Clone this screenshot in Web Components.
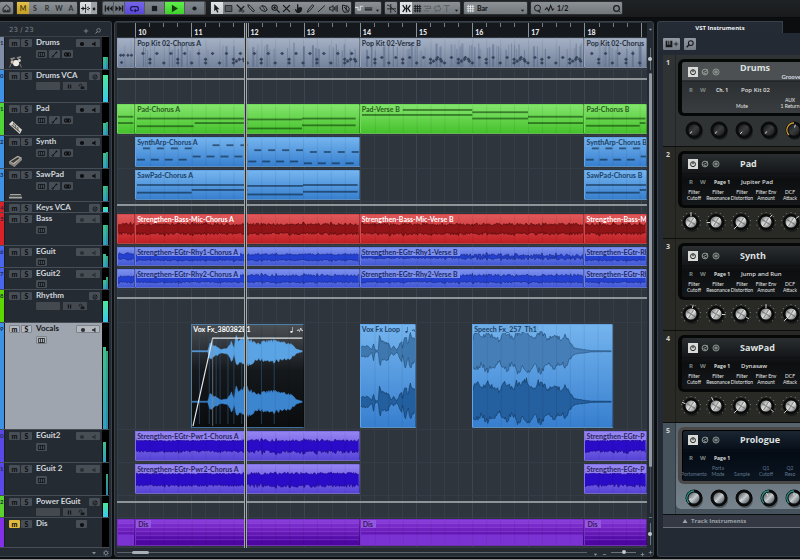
<!DOCTYPE html>
<html lang="en">
<head>
<meta charset="utf-8">
<title>Arrangement</title>
<style>
html,body{margin:0;height:100%;background:#0b0d0f;overflow:hidden}
body{font-family:Lato,"Open Sans",sans-serif;font-size:7px;font-weight:700;line-height:8px;color:#d5dae0}
</style>
</head>
<body>
<daw-app></daw-app>
<script>
const BASE = `:host,*{box-sizing:border-box}
button,select,input{font:inherit;color:inherit;margin:0;padding:0;border:0;background:none;border-radius:0;appearance:none;outline:0}
button{display:flex;align-items:center;justify-content:center}svg{display:block}`;

function define(name, render) {
  customElements.define(name, class extends HTMLElement {
    connectedCallback() {
      if (this.shadowRoot) return;
      const t = document.createElement('template');
      t.innerHTML = render(this);
      this.attachShadow({mode: 'open'}).append(t.content.cloneNode(true));
    }
  });
}

/* ---------- icons ---------- */
const S = 'fill="none" stroke="currentColor"';
const ICONS = {
  home: `<path ${S} stroke-width="1.3" d="M1.5 5.5 6 1.5l4.5 4v5h-9z"/><path d="M3 10V7.500h2V9h2V7.500h2V10z" fill="currentColor"/>`,
  auto: `<path fill="currentColor" d="M5.500 0h1v12h-1zM0 5.300h12v1.400H0zM2 3 5 6 2 9zM10 3 7 6l3 3z"/>`,
  dot: `<circle cx="6" cy="6" r="2.800" fill="currentColor"/>`,
  rec: `<circle cx="6" cy="6" r="4.200" fill="currentColor"/>`,
  prev: `<path fill="currentColor" d="M1 2h1.800v8H1zM7 2v8L3 6zM11.500 2v8l-4-4z"/>`,
  next: `<path fill="currentColor" d="M9.200 2H11v8H9.200zM5 2v8l4-4zM.5 2v8l4-4z"/>`,
  cycle: `<path ${S} stroke-width="1.500" d="M4 9H3.200C0 9 0 3.500 3.200 3.500h5.600C12 3.500 12 9 8.800 9H7.500"/><path fill="currentColor" d="M8 6.300v5L4.600 9z"/>`,
  stop: `<path fill="currentColor" d="M2.500 2.500h7v7h-7z"/>`,
  play: `<path fill="currentColor" d="M2.500 1 10.500 6l-8 5z"/>`,
  arrow: `<path fill="currentColor" d="M3 0v9.500l2.200-2L7 11.500l1.600-.8L6.900 7H10z"/>`,
  rect: `<path fill="#555b5f" stroke="currentColor" d="M1.500 2h9v8h-9z"/>`,
  scissors: `<path ${S} stroke-width="1.500" d="M1 1 8 8M5.500 8 11 3"/><circle ${S} cx="9" cy="9.500" r="1.500"/><circle ${S} cx="5" cy="9" r="1.300"/>`,
  glue: `<path ${S} stroke-width="1.200" d="m1 1 3 1 6 7-2 1.500-6-6.500z"/>`,
  eraser: `<path ${S} stroke-width="1.300" d="m1 5 3-3 4.500 1.500L11 8 8 10 3.500 8.500z"/><path ${S} d="M4 2 8 8.500"/>`,
  zoom: `<circle ${S} stroke-width="1.400" cx="4.800" cy="4.800" r="3.600"/><path ${S} stroke-width="1.800" d="m7.500 7.500 4 4M3 4.800h3.600M4.800 3v3.600"/>`,
  mute: `<path ${S} stroke-width="1.800" d="m1.500 1.500 9 9M10.500 1.500l-9 9"/>`,
  hand: `<path fill="currentColor" d="M4 0 6 1l-.5 3.500L9.500 4l1.500 2-1 4-3 2H4L1 8l.5-1.500L4 8z"/>`,
  pencil: `<path ${S} stroke-width="1.200" d="m2 11 .7-3L8.500 1l2 1.500-6 7z"/>`,
  line: `<path ${S} stroke-width="1.300" d="M1.500 10.500 10.500 2"/>`,
  speaker: `<path ${S} stroke-width="1.200" d="M.8 4.300h2L5.500 2v8L2.800 7.700h-2zM7.500 4v4M9.300 2.500v7M11 1.500v9"/>`,
  paint: `<path ${S} stroke-width="1.300" d="M2 1.500 9 3l2 3-1 4.500-6 .5-2-4zM4 4l5 5M7 3v6"/>`,
  link: `<path ${S} stroke-width="1.500" d="M0 4.500h4V8h3V3h4"/>`,
  eq: `<path fill="currentColor" d="M1 4.500h10V6H1zM1 7h10v1.500H1z"/>`,
  down: `<path fill="currentColor" d="M2 4h8L6 9z"/>`,
  cross: `<path ${S} stroke-width="1.200" d="M5 0v12M0 6.500h12M0 1.500c5 0 7 6 12 9"/>`,
  snap: `<path ${S} stroke-width="1.800" d="M1 1.500 4 6l-3 4.500M11 1.500 8 6l3 4.500M6 1v10M4 6h4"/>`,
  grid: `<path ${S} stroke-width="1.200" d="M3 1v10M6 1v10M9 1v10M1 3.200h10M1 6.200h10M1 9.200h10"/>`,
  list: `<path ${S} stroke-width="1.300" d="M1 3h9M3 6h8M1 9h7M10 3v3"/>`,
  loop: `<path ${S} stroke-width="1.400" d="M2 7V5l2-2h5M10 5v2L8 9H3M7.500 1.500 9 3 7.500 4.500M4.500 7.500 3 9l1.500 1.500"/>`,
  tee: `<path ${S} stroke-width="1.300" d="M1 2h8M5 2v9"/>`,
  q: `<circle ${S} stroke-width="1.300" cx="6" cy="5.500" r="4"/><path ${S} stroke-width="1.500" d="m6.500 8 3 3.500"/>`,
  ring: `<circle ${S} stroke-width="1.600" cx="6" cy="6" r="3.800"/><path ${S} d="m8 8 3 3"/>`,
  wave: `<path ${S} stroke-width="1.400" d="M0 8 2.500 5 5 9l2.500-7L10 8l2-2"/>`,
  lanes: `<path ${S} stroke-width="1.300" d="M.7 2.500h10.600v7H.7zM4.200 2.500v7M7.800 2.500v7"/>`,
  pen: `<path ${S} stroke-width="1.600" d="m3 9.500 6-7"/><circle cx="9.300" cy="2.500" r="1.500" fill="currentColor"/><circle cx="3" cy="9.500" r="1.500" ${S}/>`,
  stereo: `<path fill="currentColor" fill-rule="evenodd" d="M3.800 2a4 4 0 1 0 0 8 4 4 0 0 0 2.200-.8A4 4 0 0 0 8.200 10a4 4 0 1 0 0-8A4 4 0 0 0 6 2.800 4 4 0 0 0 3.800 2zM4 4v4a2 2 0 1 1 0-4zM8.500 4v4a2 2 0 0 0 0-4z"/>`,
  spk: `<path fill="currentColor" d="M2 4.500h2.500L9 1v10L4.500 7.500H2z"/>`,
  edit: `<circle ${S} stroke-width="1.400" cx="6" cy="6" r="4.300"/><path ${S} stroke-width="1.200" d="M4 6.500 8.500 4.500M4 6.500C4 9 8 8.500 8 8M10 2 8 4"/>`,
  pause: `<path fill="currentColor" d="M3 2.500h2.300v7H3zM6.700 2.500H9v7H6.700z"/>`,
  lock: `<path fill="currentColor" d="M4.500 6H11v4.500H4.500z"/><path ${S} stroke-width="1.300" d="M6.500 6V3.500C6.500 1.500 2 1.500 2 3.500V6"/>`,
  plus: `<path ${S} stroke-width="1.600" d="M6 1.500v9M1.500 6h9"/>`,
  minus: `<path ${S} stroke-width="1.600" d="M2 6h8"/>`,
  find: `<circle ${S} stroke-width="1.600" cx="7.200" cy="4.600" r="3.600"/><path ${S} stroke-width="2" d="M4.600 7.200 1 11"/>`,
  gear: `<circle ${S} stroke-width="1.500" cx="6" cy="6" r="3.300"/><path ${S} stroke-width="1.400" stroke-dasharray="1.900 1.900" d="M6 .8A5.200 5.200 0 1 1 5.990.8"/>`,
  keys: `<path fill="currentColor" d="M1 1h2.500v6H5V1h1.500v6H8V1h3v10H1z"/>`,
  power: `<circle ${S} stroke-width="1.400" cx="6" cy="6.300" r="3.700"/><path ${S} stroke-width="1.600" d="M6 3.500v3"/>`,
  flower: `<circle ${S} stroke-width="1.200" cx="6" cy="6" r="4.600"/><path ${S} stroke-width="1.100" d="M6 2v8M2.500 4l7 4M9.500 4l-7 4"/>`,
  note: `<path fill="currentColor" d="M7.500 0v9c0 3-5 3.500-5 1s3-2 4-1.500V0z"/>`,
  tri: `<path fill="currentColor" d="M6 2 11 10H1z"/>`,
  drumkit: `<path fill="#8b8a88" d="M1 3l4-1 1 1-4 2zM7 2l4-1v1.500L8 4z"/><circle cx="6.500" cy="7.500" r="2.800" fill="#efece6"/><circle cx="3" cy="6.500" r="1.600" fill="#c9b8a2"/><circle cx="9.500" cy="5" r="1.400" fill="#d9d5cf"/><path stroke="#aaa" stroke-width=".6" d="M2 8 .5 11.500M10 8l1.500 3.500"/>`,
  keytar: `<path fill="#dddad2" d="M0 3 3 0l9 8-2 4z"/><path stroke="#55534f" stroke-width="1" d="M2.500 3.500 10 10M4 1.800 5 4M6 3.500 6.500 6M8 5.500 8.500 8"/>`,
  synth: `<path fill="#b7b3ab" d="M0 7 8 1.500l4 2L4.500 10z"/><path fill="#3b3a38" d="M1.500 7 8 3l2 .8L4 8.200z"/><path fill="#8e8a84" d="M0 7l4.500 3L12 3.500v2L5 12 0 9z"/>`,
  flat: `<path fill="#a7a7a2" d="M1 6.500h10v1.200H1zM0 9h12v1.500H0z"/><path fill="#55575a" d="M0 7.700h12V9H0z"/>`
};
define('daw-icon', el => `<style>:host{display:block;flex:none;width:var(--s,8px);height:var(--s,8px)}svg{width:100%;height:100%;overflow:visible}</style>
<svg viewBox="0 0 12 12" aria-hidden="true">${ICONS[el.getAttribute('name')]}</svg>`);
const ic = n => `<daw-icon name="${n}"></daw-icon>`;

/* ---------- toolbar ---------- */
define('tool-group', () => `<style>${BASE}
:host{display:flex;align-items:stretch;height:12px;flex:none;background:linear-gradient(#8d9296,#70767a);color:#191b1d;border-radius:1px;box-shadow:0 0 0 1px #2c3032}
::slotted(*){flex:1}</style><slot></slot>`);

define('daw-toolbar', () => {
  const tools = 'arrow rect scissors glue eraser zoom mute hand pencil line speaker paint'.split(' ');
  return `<style>${BASE}
:host{display:flex;flex:none;height:18px;padding:2px 0 3px;gap:4px;background:linear-gradient(#202325,#181a1c);align-items:flex-start;border-bottom:1px solid #0a0b0c}
daw-icon{--s:9px}
.home{width:13px}.mode{width:60px}.mode button{color:#2b2f32}.mode .on{background:linear-gradient(#e6c14a,#c49c24);color:#4a3c10}
.auto{width:17px;margin-right:2px;margin-left:-1px;background:linear-gradient(#dfe2e4,#bfc3c6)}.auto button+button{flex:0 0 6px;background:#9ea3a7}.auto button+button daw-icon{--s:6px}
.trans{width:102px;margin-right:2px;box-shadow:0 0 0 1px #4a4e51;background:linear-gradient(#7f858d,#6c727a)}
.trans button{border-right:1px solid #55595f}.trans button:nth-child(-n+2){flex:0 0 11px}
.cyc{background:linear-gradient(#7566ea,#5a48d8);color:#1b1750}.go{background:linear-gradient(#5ff04c,#3fd02c);color:#123f0c}
.tools{width:140px}.tools button:first-child{background:linear-gradient(#e4e6e8,#c4c8ca)}
.lk{width:26px}.lk button:first-child{color:#d5d9db}.cr{width:12px;margin-right:-1px}.sn{width:60px}.sn button:first-child{background:#dfe2e4;flex:0 0 12px}.sn .dim{color:#5d6367}.sn button:last-child,.lk button:last-child{flex:0 0 8px}
.sn button:last-child daw-icon,.lk button:last-child daw-icon{--s:5px}
.bar{width:63px;align-items:center}.bar select,.qz select{font-size:7px;color:#111}
.bar label,.qz label{display:flex;align-items:center;gap:2px;flex:1;padding:0 2px}.bar select{flex:1}.bar daw-icon:first-child{color:#dfe3e5}
.bar daw-icon:last-child{--s:5px}
.qz{width:91px;align-items:center}.qz button{flex:0 0 12px}.qz select{width:20px}
</style>
<tool-group class="home"><button aria-label="Home">${ic('home')}</button></tool-group>
<tool-group class="mode">${[...'MSRWA'].map((c, i) => `<button class="${i ? '' : 'on'}">${c}</button>`).join('')}</tool-group>
<tool-group class="auto"><button aria-label="Auto scroll">${ic('auto')}</button><button aria-label="Options">${ic('dot')}</button></tool-group>
<tool-group class="trans"><button aria-label="Previous">${ic('prev')}</button><button aria-label="Next">${ic('next')}</button><button class="cyc" aria-label="Cycle">${ic('cycle')}</button><button aria-label="Stop">${ic('stop')}</button><button class="go" aria-label="Play">${ic('play')}</button><button aria-label="Record">${ic('dot')}</button></tool-group>
<tool-group class="tools">${tools.map(t => `<button aria-label="${t}">${ic(t)}</button>`).join('')}</tool-group>
<tool-group class="lk"><button aria-label="Link">${ic('link')}</button><button aria-label="Curve">${ic('eq')}</button><button aria-label="More">${ic('down')}</button></tool-group>
<tool-group class="cr"><button aria-label="Crossing">${ic('cross')}</button></tool-group>
<tool-group class="sn"><button aria-label="Snap">${ic('snap')}</button><button aria-label="Grid">${ic('grid')}</button><button class="dim" aria-label="Events">${ic('list')}</button><button class="dim" aria-label="Shuffle">${ic('loop')}</button><button class="dim" aria-label="Type">${ic('tee')}</button><button aria-label="More">${ic('down')}</button></tool-group>
<tool-group class="bar"><label>${ic('grid')}<select aria-label="Grid type"><option>Bar</option></select>${ic('down')}</label></tool-group>
<tool-group class="qz"><button aria-label="Quantize">${ic('q')}</button><button aria-label="Iterative">${ic('wave')}</button><label><select aria-label="Quantize preset"><option>1/2</option></select></label><button aria-label="Quantize panel">${ic('ring')}</button></tool-group>`;
});

/* ---------- track list ---------- */
const TRACKS = [
  {n: 'Drums', c: '#7f8ea6', no: 1, k: 'inst', pic: 'drumkit', m: [12, 12]},
  {n: 'Drums VCA', c: '#3e92e6', no: 0, k: 'vca', m: [27]},
  {n: 'Pad', c: '#4fd535', no: 1, k: 'inst', pic: 'keytar', m: [12, 13]},
  {n: 'Synth', c: '#3e92e6', no: 2, k: 'inst', pic: 'synth', m: [15, 16]},
  {n: 'SawPad', c: '#3e92e6', no: 3, k: 'inst', pic: 'flat', m: [15, 15]},
  {n: 'Keys VCA', c: '#d82228', no: 4, k: 'vca', h: 11, m: [5]},
  {n: 'Bass', c: '#d82228', no: 5, k: 'audio', m: [20, 20]},
  {n: 'EGuit', c: '#4a66ee', no: 6, k: 'audio', h: 22, m: [13, 11]},
  {n: 'EGuit2', c: '#4a66ee', no: 7, k: 'audio', h: 22, m: [9, 12]},
  {n: 'Rhythm', c: '#5cd800', no: 8, k: 'vca', m: [21]},
  {n: 'Vocals', c: '#3e92e6', no: 9, k: 'audio', h: 107, sel: 1, m: [82, 78]},
  {n: 'EGuit2', c: '#5b48e8', no: 0, k: 'audio', m: [20, 0]},
  {n: 'EGuit 2', c: '#5b48e8', no: 1, k: 'audio', m: [0, 21]},
  {n: 'Power EGuit', c: '#5cd22e', no: 2, k: 'vca', h: 22, m: [14]},
  {n: 'Dis', c: '#8430e8', no: '', k: 'midi', h: 30, m: []}
];
define('track-row', el => {
  const t = TRACKS[el.getAttribute('index')], vca = t.k == 'vca';
  const box = (n, l) => `<button class="b" aria-label="${l}">${ic(n)}</button>`;
  return `<style>${BASE}
:host{display:flex;flex:none;height:${t.h || 33}px;overflow:hidden;border-bottom:1px solid #474d54;background:#252b32;color:#cfd5dc}
.no{width:5px;flex:none;background:${t.c};color:#1d2b44;font-size:6px;overflow:hidden;padding-top:2px;border-right:1px solid #1a1d21}
.body{flex:1;min-width:0;display:grid;grid-template-columns:23px minmax(0,1fr) auto;gap:2px 4px;padding:1px 2px 0 4px;align-content:start;align-items:center;${t.sel ? 'background:#9fa5ae;color:#15181b' : ''}}
.ms{display:flex;gap:1px}.ms button,.b,.rm{height:8px;background:#484e55;color:#0c0e11;border-radius:1px}
.ms button{flex:1;font-size:7px;font-weight:900}.ms .on{background:#e0b93c}
.name{font-size:8px;line-height:9px;white-space:nowrap;margin:0;font-weight:700}
.rm{display:flex;width:${t.k == 'midi' ? 11 : 24}px;--s:6px}.rm button{flex:1}.right{display:flex;min-width:${vca ? 11 : 24}px;justify-content:${vca ? 'flex-end' : 'flex-start'}}
.row2{grid-column:2/4;display:flex;gap:2px;padding-top:${vca || t.h == 22 ? 0 : 1}px}.b{width:11px;--s:6px}
.row2 .b{--s:7px}.dim{color:#2c3136}.val{width:24px;height:8px;background:#43494f;border-radius:1px}.pl{display:flex;width:24px;height:8px;background:#43494f;color:#15181c;margin-left:1px;--s:7px}.pl button{flex:1}
.pic{--s:13px;align-self:start;padding-top:6px}
.meter{width:7px;flex:none;background:#000;display:flex;align-items:flex-end;padding:0 1px}
.meter i{flex:1;background:linear-gradient(#4be89a,#38c8f0)}.meter.two i{background:linear-gradient(#3fc08c,#2f9fc4)}.meter.two i+i{background:linear-gradient(#37a87c,#2b8bb0)}
${t.sel ? '.ms button,.b,.rm{background:#b4b9bf;border:1px solid #7d838a}' : ''}
</style>
<span class="no">${t.no}</span>
<div class="body"><div class="ms"><button class="${t.k == 'midi' ? 'on' : ''}" aria-label="Mute">m</button><button aria-label="Solo">S</button></div>
<h3 class="name">${t.n}</h3>
<div class="right">${vca ? box('edit', 'Edit') : `<div class="rm ${t.k == 'audio' ? 'dim' : ''}"><button aria-label="Record">${ic('rec')}</button>${t.k == 'midi' ? '' : `<button aria-label="Monitor">${ic('spk')}</button>`}</div>`}</div>
${t.h == 11 || t.k == 'midi' ? '' : `${t.pic ? `<div class="pic" style="grid-row:2/4">${ic(t.pic)}</div>` : ''}
<div class="row2">${vca ? `<span class="val"></span><span class="pl"><button aria-label="Pause">${ic('pause')}</button><button aria-label="Unlock">${ic('lock')}</button></span>` : t.k == 'inst' ? box('lanes', 'Lanes') + box('pen', 'Edit') + box('stereo', 'Stereo') : box('lanes', 'Lanes')}</div>`}</div>
<div class="meter ${t.m.length > 1 ? 'two' : ''}">${t.m.map(v => `<i style="height:${v}px"></i>`).join('')}</div>`;
});
define('track-list', () => `<style>${BASE}
:host{display:flex;flex-direction:column;flex:0 0 112px;min-width:0;min-height:0;background:#252b33;border:solid #39414c;border-width:1px 1px 1px 0;border-radius:0 3px 3px 0;padding:0 2px 0 0}
header{display:flex;align-items:center;height:15px;flex:none;padding:2px 8px 0 9px;gap:6px;color:#858d96;border-bottom:1px solid #3a4149;--s:6px}
header span{flex:1;font:7px/8px "DejaVu Sans",sans-serif;color:#79818a}
.rows{flex:1;min-height:0;overflow:hidden;display:flex;flex-direction:column}
footer{height:8px;flex:none;display:flex;justify-content:flex-end;align-items:center;gap:6px;--s:6px;color:#868e97}
</style><header><span>23 / 23</span><button aria-label="Add track">${ic('plus')}</button><button aria-label="Find track">${ic('find')}</button></header>
<div class="rows">${TRACKS.map((t, i) => `<track-row index="${i}"></track-row>`).join('')}</div>
<footer><button aria-label="Divide">${ic('down')}</button><button aria-label="Settings">${ic('gear')}</button></footer>`);

/* ---------- event drawings ---------- */
function rng(seed) { return () => (seed = (seed * 16807) % 2147483647) / 2147483647; }
function band(w, top, bot, seed, jt, jb, mod) {
  const r = rng(seed), a = [], b = [];
  for (let x = 0; x <= w; x += 1) {
    const k = mod ? mod(x / w) : 1, spike = x % 14 < 2 ? 1.6 : 1;
    a.push([x, (top - (r() - .3) * jt * spike * k).toFixed(1)]);
    b.push([x, (bot + (r() - .3) * jb * spike * k).toFixed(1)]);
  }
  return {a, b};
}
function area(o, fill, stroke) {
  return `<path d="M${o.a.join('L')}L${o.b.slice().reverse().join('L')}Z" fill="${fill}"/><path d="M${o.a.join('L')}M${o.b.join('L')}" fill="none" stroke="${stroke}" stroke-width="1" opacity=".6"/>`;
}
function env(w, cy, amp, pts, seed, f, st) {
  const r = rng(seed), a = [], b = [];
  for (let x = 0; x <= w; x++) {
    const p = x / w; let i = 0; while (i < pts.length - 2 && pts[i + 1][0] < p) i++;
    const [x0, y0] = pts[i], [x1, y1] = pts[i + 1], v = y0 + (y1 - y0) * Math.min(1, (p - x0) / (x1 - x0));
    a.push([x, (cy - Math.max(.4, v * amp * (.7 + .35 * r()))).toFixed(1)]);
    b.push([x, (cy + Math.max(.4, v * amp * (.7 + .35 * r()))).toFixed(1)]);
  }
  return area({a, b}, f, st);
}
const bar = (x, y, w, c = '#0b2238', h = 2) => `<rect x="${x}" y="${y}" width="${w}" height="${h}" fill="${c}" opacity=".6"/>`;
const DRAW = {
  drums(w, s) {
    const r = rng(s * 77 + 5), hi = s == 2 ? 20.5 : 16; let o = '';
    for (let x = 2; x < w; x += 3) if (r() > .45) o += `<rect x="${(x + r() * 2).toFixed(0)}" y="${(4 + r() * 9).toFixed(0)}" width="${r() > .7 ? 2 : 1}" height="27" fill="#48597a" opacity="${(.15 + r() * .35).toFixed(2)}"/>`;
    const d = (x, y) => { if (x < w - 1) o += `<path d="M${x} ${y - 2}l2 2-2 2-2-2z" fill="#39455c"/>`; };
    if (s == 0) { [[3, 18], [6, 18], [11, 18], [15, 18], [4, 26]].forEach(p => d(...p)); return o; }
    for (let x = 0; x < w; x += 28) {
      d(x + 7, hi); d(x + 14, 22.5); d(x + 14, 26.5); d(x + 21, hi); d(x + 28, 26.5);
      if (x % 112 == 84 || (s == 2 && x % 84 == 56)) { d(x + 17, 24.5); d(x + 20, 22.5); d(x + 24, 22.500); d(x + 25, 24.5); }
    }
    return o;
  },
  pad(w, s) {
    const g = '#12400c';
    if (s == 0) return bar(0, 12, 17, g) + bar(0, 19, 17, g);
    if (s == 1) return bar(1, 14, 108, g) + bar(1, 22.5, 57, g) + bar(59, 19, 53, g) + bar(112, 15, 55, g) + bar(112, 25, 55, g, 2) + bar(167, 14, 54, g) + bar(167, 21.5, 54, g);
    if (s == 2) return bar(1, 10, 111, g) + bar(42, 4.5, 70, g) + bar(112, 7, 56, g) + bar(112, 14, 56, g) + bar(168, 12, 56, g) + bar(168, 19, 56, g);
    return bar(1, 14, 61, g) + bar(1, 22, 55, g) + bar(56, 19, 6, g);
  },
  synth(w) {
    let o = ''; const up = [10.500, 7, 12.5, 14.500], lo = [23, 19.5, 25, 27];
    for (let q = 0; q < 4; q++) for (let i = 0; i < 4; i++) {
      if (!(q == 1 && i == 0)) o += bar(q * 56 + 7 + i * 14, up[q], 7);
      o += bar(q * 56 + 1 + i * 14, lo[q], 8);
    }
    return o;
  },
  saw: () => bar(1, 14.5, 108) + bar(1, 23, 55) + bar(56, 20, 56) + bar(112, 15.5, 56) + bar(112, 25, 56) + bar(168, 14.5, 55) + bar(168, 22, 55),
  bass: (w, s) => area(band(w, 11, 20, 31 + s, 3, 3), '#8e1417', '#3d0607'),
  rhy: (w, s) => {
    if (s == 10) return env(w, 10, 5, [[0, .4], [.1, 1], [.3, .5], [.6, 1], [1, .6]], 5, '#2340d0', '#14237a');
    if (s == 12) return area(band(w, 9.5, 11.5, 9, 2, 2, p => p > .45 ? 1.9 : 1), '#2340d0', '#14237a');
    return area(band(w, s > 20 ? 7 : 8, 14, 41 + s, s > 20 ? 3 : 2, 2), '#2340d0', '#14237a');
  },
  pwr: (w, s) => area(band(w, 10, s > 4 ? 22 : 21, 61 + s, 2, 3, p => p > .48 ? 1.4 : .8), '#2a0bc8', '#1a0880'),
  dis(w, s) {
    let o = ''; const c = ['#7a2bcc', '#7022c0', '#6418b4', '#580eaa', '#4e06a2'];
    for (let i = 0; i < 5; i++) o += `<rect y="${5 * i + 4}" width="${w}" height="6" fill="${c[i]}"/><rect y="${5 * i + 4}" width="${w}" height="1" fill="#a46ae6" opacity=".45"/>`;
    if (s % 2 == 0) o += `<rect y="18" width="${w}" height="14" fill="#7a33d2"/>`;
    return o;
  },
  vox(w) {
    const p = [[0, .03], [.18, .03], [.2, .45], [.26, .3], [.33, .1], [.4, .15], [.45, .55], [.48, .2], [.5, .9], [.54, .5], [.58, .9], [.62, .8], [.75, .45], [.9, .6], [1.1, .45], [1.2, .1], [1.25, .03]].map(([a, b]) => [a * .8, b]);
    p[p.length - 1][0] = 1; let l = '';
    for (let x of [7, 17, 24, 28, 36, 42, 50, 53, 70, 83]) l += `<rect x="${x}" y="12" width="1" height="90" fill="#2b4c6e" opacity=".8"/>`;
    return l + env(w, 27, 20, p, 7, '#5aa4e6', '#5aa4e6') + env(w, 79, 20, p, 7, '#3c86d0', '#3c86d0') +
      `<path d="M1 104 21 13.500H${w}" fill="none" stroke="#e3e6e8" stroke-width="1.200"/><path d="M21 14V104" stroke="#8a8f94" stroke-width=".7"/>`;
  },
  loop(w) {
    const p = [[0, .3], [.14, .35], [.2, .05], [.23, .5], [.26, .05], [.32, .05], [.34, .8], [.4, .5], [.5, .5], [.56, .05], [.6, .3], [.66, .04], [.7, .3], [.74, .7], [.77, .2], [.82, 1], [.87, .3], [.9, 1], [1, .6]];
    return env(w, 27, 20, p, 3, '#3f78ae', '#1e466e') + env(w, 79, 20, p, 3, '#235e9e', '#103458');
  },
  speech(w) {
    const p = [], v = [.7, .85, .6, 1, .75, .7, .5, .9, .8, .6, .95, .8, 1, .85, .7, 1, .8, .6, .85, .7, .55, .8];
    v.forEach((y, i) => p.push([i * .032, y]));
    p.push([.69, .5], [.73, .15], [.8, .08], [.85, .03], [1, .02]);
    return env(w, 27, 24, p, 13, '#467fb8', '#1e466e') + env(w, 79, 24, p, 13, '#245f9f', '#103458');
  }
};
const THEME = {
  drums: ['#a4b0c4', '#74839c', '#25303f'], pad: ['#83e56c', '#45c22c', '#2a5a1c'], synth: ['#74b4ee', '#377fcf', '#1d3f66'], saw: ['#74b4ee', '#377fcf', '#1d3f66'],
  bass: ['#e0585a', '#c02024', '#fff'], rhy: ['#7c90ee', '#4258d8', '#1d2a66'], pwr: ['#9484f2', '#5643d8', '#2a2560'],
  dis: ['#8a3fdc', '#4e06a2', '#35185e'], vox: ['#4a4f54', '#0a0c0e', '#fff'], loop: ['#74b4ee', '#377fcf', '#1d3f66'], speech: ['#74b4ee', '#377fcf', '#1d3f66']
};
define('daw-clip', el => {
  const k = el.getAttribute('kind'), s = +el.getAttribute('seed') || 0, w = +el.getAttribute('units'), h = +el.getAttribute('tall') || 31, [a, b, c] = THEME[k];
  const icons = k == 'vox' || k == 'loop';
  let beats = ''; for (let x = 14; x < w; x += 14) beats += `<rect x="${x}" width="1" height="${h}" fill="#000" opacity=".07"/>`;
  return `<style>${BASE}
:host{display:block;position:relative;overflow:hidden;min-width:0;margin:1px 0;background:${k == 'vox' ? `linear-gradient(${a},#15181b 45%,${b})` : `linear-gradient(${a},${b})`};border:1px solid ${k == 'vox' ? '#4d7ea8' : `color-mix(in srgb,${a},${b} 30%)`};border-right-color:#0004;border-bottom-color:${k == 'vox' ? '#3d6e98' : '#0003'}}
svg.d{position:absolute;inset:0;width:100%;height:100%}
.t{position:relative;display:flex;color:${c};padding-left:1px;gap:2px;align-items:center}
.t span{flex:none;white-space:nowrap;${k == 'dis' ? 'background:#9557e0;padding:0 3px 0 2px;margin-left:-1px;' : ''}${k == 'rhy' || k == 'pwr' ? `background:${a};padding-right:2px;` : ''}${k == 'speech' ? 'background:#6cabe4;padding-right:2px;' : ''}}
.t i{flex:1}.t daw-icon{--s:6px}
</style><svg class="d" viewBox="0 0 ${w} ${h}" preserveAspectRatio="none" aria-hidden="true">${DRAW[k](w, s)}${beats}</svg>
<div class="t">${el.textContent ? '<span><slot></slot></span>' : ''}${icons ? `<i></i>${ic('note')}${ic('wave')}` : ''}</div>`;
});

/* ---------- arrangement ---------- */
const line = b => 2 + (b - 10) * 4;
const clip = (k, from, to, seed, label = '', tall = 31) => {
  const c0 = from == 9 ? 1 : line(from), c1 = to == 19 ? 39 : line(to);
  const units = from == 9 ? 18 : to == 19 ? 62 : (to - from) * 56;
  return `<daw-clip kind="${k}" seed="${seed}" units="${units}" tall="${tall}" style="grid-column:${c0}/${c1}">${label}</daw-clip>`;
};
const four = (k, s, a, b, c, tall) => clip(k, 9, 10, s, '', tall) + clip(k, 10, 14, s + 1, a, tall) + clip(k, 14, 18, s + 2, b, tall) + clip(k, 18, 19, s + 3, c, tall);
const LANES = [
  four('drums', 0, 'Pop Kit 02-Chorus A', 'Pop Kit 02-Verse B', 'Pop Kit 02-Chorus'), 9,
  four('pad', 0, 'Pad-Chorus A', 'Pad-Verse B', 'Pad-Chorus B'),
  clip('synth', 10, 14, 0, 'SynthArp-Chorus A') + clip('synth', 18, 19, 0, 'SynthArp-Chorus B'),
  clip('saw', 10, 14, 0, 'SawPad-Chorus A') + clip('saw', 18, 19, 0, 'SawPad-Chorus B'), 3,
  four('bass', 0, 'Strengthen-Bass-Mic-Chorus A', 'Strengthen-Bass-Mic-Verse B', 'Strengthen-Bass-M'),
  four('rhy', 10, 'Strengthen-EGtr-Rhy1-Chorus A', 'Strengthen-EGtr-Rhy1-Verse B', 'Strengthen-EGtr-Rh', 20),
  four('rhy', 20, 'Strengthen-EGtr-Rhy2-Chorus A', 'Strengthen-EGtr-Rhy2-Verse B', 'Strengthen-EGtr-Rh', 20), 8,
  clip('vox', 11, 13, 0, 'Vox Fx_380382B1', 105) + clip('loop', 14, 15, 0, 'Vox Fx Loop', 105) + clip('speech', 16, 18.5, 0, 'Speech Fx_257_Th1', 105),
  clip('pwr', 10, 14, 1, 'Strengthen-EGtr-Pwr1-Chorus A') + clip('pwr', 18, 19, 2, 'Strengthen-EGtr-P'),
  clip('pwr', 10, 14, 5, 'Strengthen-EGtr-Pwr2-Chorus A') + clip('pwr', 18, 19, 6, 'Strengthen-EGtr-P'), 6,
  four('dis', 0, 'Dis', 'Dis', 'Dis')
];
define('arrange-view', () => `<style>${BASE}
:host{flex:1;min-width:0;min-height:0;display:grid;grid-template:15px 1fr 8px/1fr 6px;background:#252b33;border:1px solid #39414c;border-radius:3px;padding:0 0 0 2px;position:relative}
.cols{display:grid;grid-template-columns:minmax(0,1820fr) repeat(36,minmax(0,1404fr)) minmax(0,636fr)}
.ruler{grid-area:1/1;background:#15181c;border-top:1px solid #2b323a;overflow:hidden;font-size:7px;font-weight:900;color:#e6e9ec}
.ruler span{border-left:1px solid #8a8f94;padding:5px 0 0 2px;white-space:nowrap}.ruler u{border-left:1px solid #777d83;height:4px}
.lanes{grid-area:2/1;position:relative;overflow:hidden;display:flex;flex-direction:column;background:#2e353d;min-height:0}
.bg{position:absolute;inset:0}.bg i{border-left:1px solid #353d46}.bg i:nth-child(4n+2){border-color:#3b4550}
.lane{position:relative;flex:none;border-bottom:1px solid #353c45}
.lane hr{margin:0;border:0;border-top:2px solid #8f9499;grid-column:1/-1;align-self:start}
.head{position:absolute;z-index:3;top:1px;bottom:8px;left:calc(2px + (100% - 8px) * .239);width:3px;border:solid #a4a7a7;border-width:0 1px;background:#2a2f33}
.v{grid-area:1/2/4/3;display:flex;flex-direction:column;align-items:center;--s:5px;color:#9097a0;padding:3px 0}
.v .z{width:1px;background:#6c737b;height:22px;display:flex;align-items:center;justify-content:center;margin:5px 0 3px}
.v .first{margin-top:18px}
.knob{width:4px;height:4px;border-radius:50%;background:#c5cad0;flex:none}
.v .thumb{width:3px;flex:379;background:#9298a0;border-radius:2px}.v .track{width:1px;flex:44;background:#444b54}
.h{grid-area:3/1;display:flex;align-items:center;gap:4px;--s:5px;color:#9aa1a9;padding-right:2px}
.h .bar{flex:1;height:1px;background:#5b626a;display:flex;align-items:center;padding-left:15px;margin-right:2px}.h .bar b{width:17px;height:3px;border-radius:2px;background:#aab0b7}
.h .zz{width:25px;height:1px;background:#6c737b;display:flex;align-items:center;justify-content:center}
</style>
<div class="ruler cols">${Array.from({length: 37}, (_, i) => i % 4 ? `<u style="grid-column:${i + 2}"></u>` : `<span style="grid-column:${i + 2}">${10 + i / 4 < 19 ? 10 + i / 4 : ''}</span>`).join('')}</div>
<div class="lanes"><div class="bg cols">${'<i></i>'.repeat(38)}</div>
${LANES.map((l, i) => { const h = TRACKS[i].h || 33; return `<div class="lane cols" style="height:${h}px">${typeof l == 'number' ? `<hr style="margin-top:${l - 1}px">` : l}</div>`; }).join('')}</div>
<div class="v"><button aria-label="Ruler menu">${ic('down')}</button><span class="z first"><span class="knob"></span></span><span class="thumb"></span><span class="track"></span>${ic('minus')}<span class="z"><span class="knob"></span></span>${ic('plus')}</div>
<div class="h"><span class="bar"><b></b></span>${ic('down')}${ic('minus')}<span class="zz"><span class="knob"></span></span>${ic('plus')}</div>
<div class="head"></div>`);

/* ---------- instrument rack ---------- */
define('rack-knob', el => {
  const v = +el.getAttribute('value'), k = el.getAttribute('look'), col = el.getAttribute('arc');
  const a = (v * 270 - 225) * Math.PI / 180, p = r => `${(13 + r * Math.cos(a)).toFixed(1)} ${(13 + r * Math.sin(a)).toFixed(1)}`;
  let t = ''; if (k == 'metal') for (let i = 0; i < 11; i++) { const b = (i * 27 - 225) * Math.PI / 180; t += `<circle cx="${13 + 9.5 * Math.cos(b)}" cy="${13 + 9.5 * Math.sin(b)}" r=".5" fill="#8a8c8a"/>`; }
  const g = k == 'dark' ? ['#3a3c3d', '#161718'] : k == 'pro' ? ['#c4cacd', '#3f464b'] : ['#e8e8e6', '#5d6062'];
  return `<style>${BASE}:host{display:block;position:relative;width:26px;height:26px}svg{width:26px;height:26px}input{position:absolute;inset:0;width:100%;height:100%;opacity:0}</style>
<svg viewBox="0 0 26 26" aria-hidden="true"><defs><linearGradient id="g" x1="0" y1="0" x2="1" y2="1"><stop offset="0" stop-color="${g[1]}"/><stop offset=".5" stop-color="${g[0]}"/><stop offset="1" stop-color="${g[1]}"/></linearGradient></defs>
<circle cx="14" cy="15" r="8" fill="#000" opacity=".35"/>${t}<circle cx="13" cy="13" r="${k == 'metal' ? 7.5 : 8}" fill="#0c0d0e" stroke="#070808"/><circle cx="13" cy="13" r="5.500" fill="url(#g)"/>
${k == 'metal' ? '<path d="M9 10.500l8 5M15.500 9l-5 8" stroke="#4a4c4e" stroke-width="1.300" opacity=".55"/>' : ''}
${col ? `<path d="M8 18A7 7 0 0 1 13 6" fill="none" stroke="${col}" stroke-width="1.300"/>` : ''}
<path d="M${p(k == 'metal' ? 6 : 2.5)}L${p(k == 'metal' ? 9.500 : 5.5)}" stroke="#dcdedd" stroke-width="1"/></svg>
<input type="range" min="0" max="1" step="0.01" value="${v}" aria-label="${el.getAttribute('label')}">`;
});
const F = ['Filter<br>Cutoff', 'Filter<br>Resonance', 'Filter<br>Distortion', 'Filter Env<br>Amount', 'DCF<br>Attack'];
const DEV = [
  {n: 'Drums', p: 'Pop Kit 02', g: 'Ch. 1', l: ['', '', '<br>Mute', '', 'AUX<br>1 Return'], look: 'dark', k: [.02, .02, 0, .02, .55], side: 'Groove'},
  {n: 'Pad', p: 'Jupiter Pad', g: 'Page 1', l: F, look: 'metal', k: [.5, .15, 0, .65, .7]},
  {n: 'Synth', p: 'Jump and Run', g: 'Page 1', l: F, look: 'metal', k: [.55, .85, .95, .5, 0]},
  {n: 'SawPad', p: 'Dynasaw', g: 'Page 1', l: F, look: 'metal', k: [.25, .4, 0, .97, 0]},
  {n: 'Prologue', p: '', g: 'Page 1', l: ['<br>Portamento', 'Porta<br>Mode', '<br>Sample', 'Q1<br>Cutoff', 'Q2<br>Reso'], look: 'pro', k: [.1, 0, .05, .4, .5]}
];
define('rack-slot', el => {
  const i = +el.getAttribute('index'), d = DEV[i], pro = i == 4, one = i == 0;
  const arc = j => pro && j != 1 && j != 2 ? '#2b8f84' : one && j == 4 ? '#c79a34' : '';
  return `<style>${BASE}
:host{display:flex;flex:none;height:92px;border-bottom:1px solid #0d0e0e;overflow:hidden;background:${pro ? '#46525c' : one ? '#303334' : '#292926'};font-family:"Open Sans",sans-serif}
.no{width:13px;flex:none;padding:4px 0 0 3px;font-size:7px;color:#d0d3d3;border-right:1px solid #0004}
.dev{flex:1;min-width:0;padding:4px 0 0 2px;${pro ? 'margin:0 0 5px;background:linear-gradient(#56626c,#77838c);border-radius:0 0 0 5px' : ''}}
.lcd{height:57px;border:solid ${pro ? '#4a4846' : '#060707'};border-width:3px 0 3px 4px;border-radius:6px 0 0 6px;background:${one ? 'linear-gradient(#4c5052 0 35%,#2c2f31 36%,#3a3d3f)' : pro ? 'linear-gradient(#1b2733,#040b15 45%,#0b1520)' : 'linear-gradient(#2a2e31,#0c0e10 50%,#15181a)'};display:grid;grid-template-rows:20px 13px 1fr;overflow:hidden;${pro ? 'box-shadow:inset 1px 1px #000' : ''}}
.a{display:grid;grid-template-columns:52px 1fr;align-items:center;padding-left:6px;border-bottom:1px solid #0003}
.ics{display:flex;gap:2px;align-items:center;color:#9aa69f;--s:8px}.ics .p{background:#d9dbd8;color:#191b1c;width:10px;height:10px}.ics button{width:9px}
h3{margin:0;font-size:9px;line-height:12px;color:#dfe1e0}
.b{display:grid;grid-template-columns:11px 11px 30px 1fr;align-items:center;padding:3px 0 0 7px;color:#dcdedd;font-size:6px;white-space:nowrap}
.b button{justify-content:flex-start;color:#7f8884;font-size:6px}.b .g{font-size:5px;text-align:center;padding-right:8px}.b .pr{font-weight:600}
.l{display:grid;grid-template-columns:repeat(5,24px);font-family:Lato,sans-serif;font-size:5px;line-height:6px;text-align:center;color:${pro ? '#60788f' : '#e6e8e7'};align-content:start;white-space:nowrap;padding-top:2px;font-weight:400}
.l span{display:flex;justify-content:center}
.k{display:grid;grid-template-columns:repeat(5,25px);padding-left:${one || pro ? 3 : 0}px;margin-top:1px}
.a.gr{grid-template-columns:52px 1fr auto;padding-right:1px}.a.gr h3{align-self:start}.groove{align-self:end;font:700 6px/8px Lato,sans-serif}
</style><span class="no">${i + 1}</span>
<div class="dev"><div class="lcd"><div class="a ${d.side ? 'gr' : ''}"><div class="ics"><button class="p" aria-label="Power">${ic('power')}</button><button aria-label="Edit">${ic('edit')}</button><button aria-label="Freeze">${ic('flower')}</button></div><h3>${d.n}</h3>${d.side ? `<div class="groove">${d.side}</div>` : ''}</div>
<div class="b"><button>R</button><button>W</button><span class="g">${d.g}</span><span class="pr">${d.p}</span></div>
<div class="l">${d.l.map(t => `<span><span>${t ? `<div>${t}</div>` : ''}</span></span>`).join('')}</div></div>
<div class="k">${d.k.map((v, j) => `<rack-knob value="${v}" look="${d.look}" arc="${arc(j)}" label="Control ${j + 1}"></rack-knob>`).join('')}</div></div>`;
});
define('vst-rack', () => `<style>${BASE}
:host{display:flex;flex-direction:column;flex:0 0 143px;min-height:0;overflow:hidden;font-family:"Open Sans",sans-serif}
.tab{width:126px;height:12px;flex:none;background:#252b35;border:1px solid #39414c;border-bottom:0;border-radius:3px 0 0 0;font-size:6px;color:#f0f2f4}
.panel{flex:1;min-height:0;background:#242a33;padding:5px 0 0 5px;border:solid #39414c;border-width:0 0 1px 1px;border-radius:0 0 0 3px;display:flex;flex-direction:column}
.tools{display:flex;gap:4px;height:17px;flex:none}.tools button{height:12px;background:linear-gradient(#959ba4,#777d86);color:#15181b;border-radius:1px;--s:8px}
.tools button:first-child{width:17px}.tools button:last-child{width:12px}.tools .pl{--s:6px}
.foot{flex:none;height:13px;justify-content:flex-start;gap:3px;padding-left:19px;background:#343842;color:#9ba1a9;border-bottom:1px solid #6b7078;--s:6px;font-size:6px}
</style><button class="tab" role="tab">VST Instruments</button>
<div class="panel"><div class="tools"><button aria-label="Add instrument">${ic('keys')}<daw-icon class="pl" name="plus"></daw-icon></button><button aria-label="Find">${ic('find')}</button></div>
${DEV.map((d, i) => `<rack-slot index="${i}"></rack-slot>`).join('')}
<button class="foot">${ic('tri')}Track Instruments</button></div>`);

define('daw-app', () => `<style>:host{display:flex;flex-direction:column;height:100vh;box-sizing:border-box;border-bottom:1px solid #8b8e92}
main{flex:1;min-height:0;display:flex;gap:2px;padding:3px 0 2px}vst-rack{margin-left:1px}
</style><daw-toolbar></daw-toolbar><main><track-list></track-list><arrange-view></arrange-view><vst-rack></vst-rack></main>`);
</script>
</body>
</html>
